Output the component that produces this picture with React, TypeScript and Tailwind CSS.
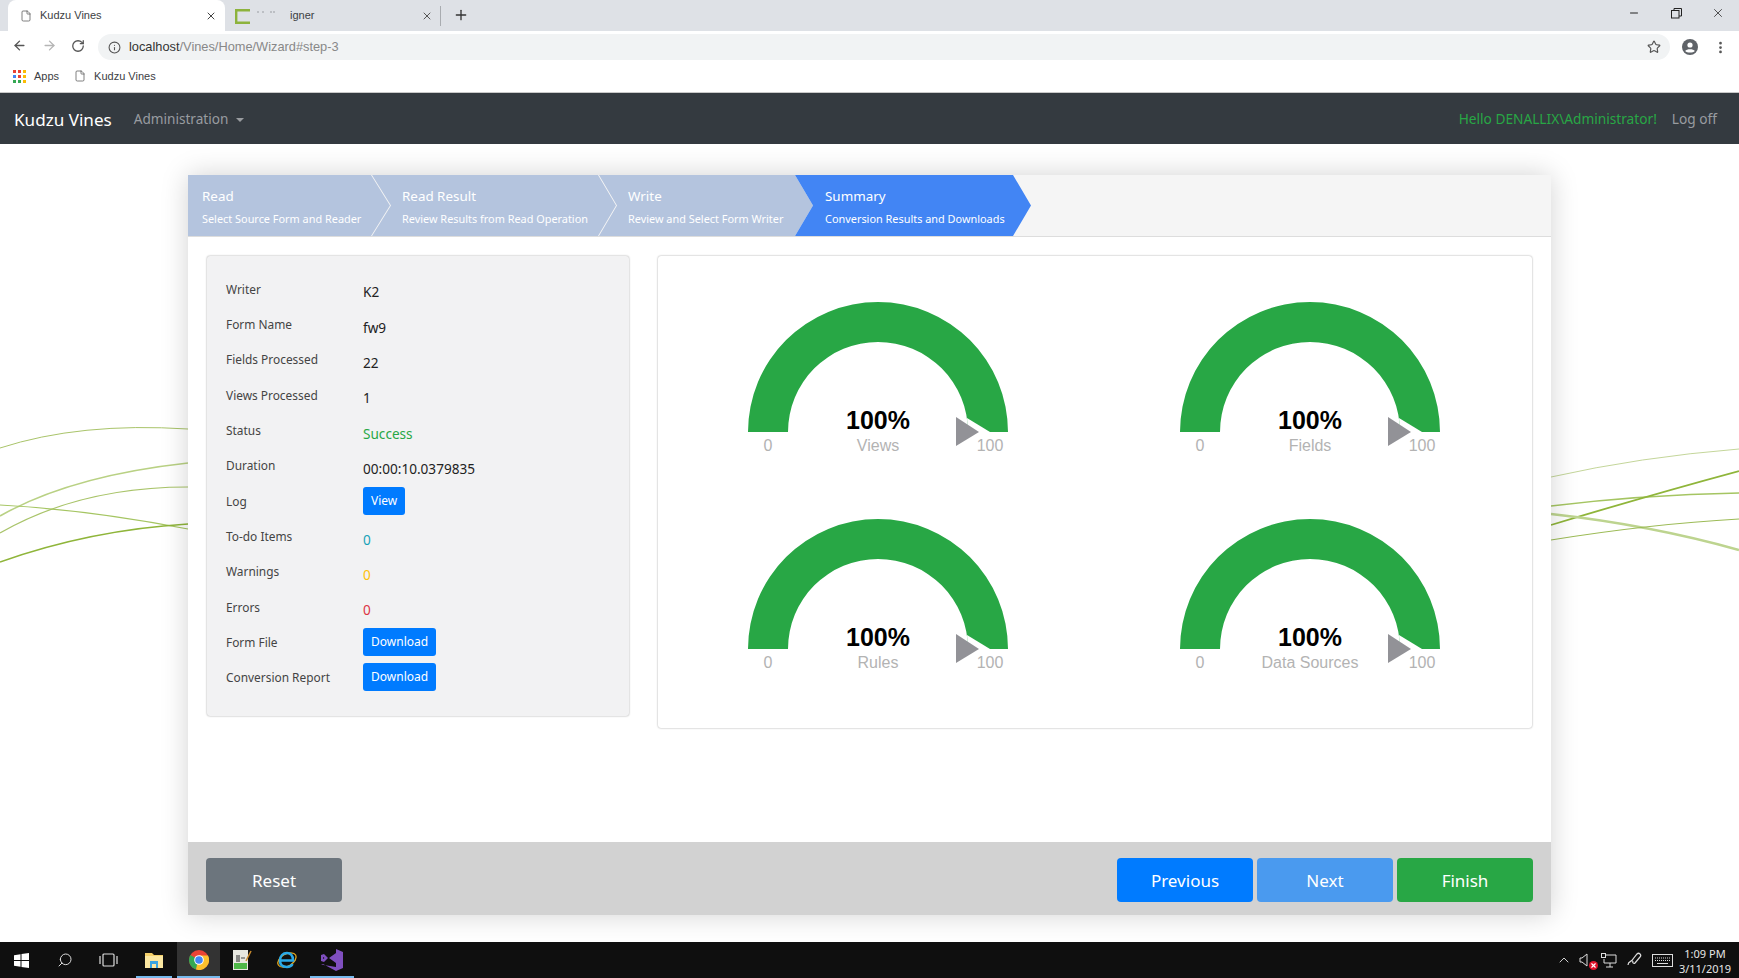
import { ArrowLeft, ArrowRight, RotateCw, Info, Star, MoreVertical, X, Minus, Plus, File, ChevronUp, Search } from 'lucide-react';

const pageFont = "font-['Noto_Sans',sans-serif]";

const steps = [
  { title: 'Read', sub: 'Select Source Form and Reader' },
  { title: 'Read Result', sub: 'Review Results from Read Operation' },
  { title: 'Write', sub: 'Review and Select Form Writer' },
  { title: 'Summary', sub: 'Conversion Results and Downloads', active: true },
];

const gauges = ['Views', 'Fields', 'Rules', 'Data Sources'];

function Gauge({ label }: { label: string }) {
  // justgage style half donut, center is at 150,136
  return (
    <svg width="300" height="166" viewBox="0 0 300 166" className="block mx-auto">
      <path d="M20 136 A130 130 0 0 1 280 136 L240 136 A90 90 0 0 0 60 136 Z" fill="#28a745" />
      <polygon points="240,136 239,122 262,136" fill="#ffffff" />
      <polygon points="228,121 228,150 251,136" fill="#929297" />
      <text x="150" y="133" textAnchor="middle" fontFamily="'Liberation Sans',Arial,sans-serif" fontWeight="700" fontSize="25" fill="#000000">100%</text>
      <text x="150" y="155" textAnchor="middle" fontFamily="'Liberation Sans',Arial,sans-serif" fontSize="16" fill="#b3b3b3">{label}</text>
      <text x="40" y="155" textAnchor="middle" fontFamily="'Liberation Sans',Arial,sans-serif" fontSize="16" fill="#b3b3b3">0</text>
      <text x="262" y="155" textAnchor="middle" fontFamily="'Liberation Sans',Arial,sans-serif" fontSize="16" fill="#b3b3b3">100</text>
    </svg>
  );
}

function Row({ label, children }: { label: string; children: React.ReactNode }) {
  return (
    <div className="flex items-center h-[35.33px]">
      <div className="w-[137px] shrink-0 text-[11.9px] text-[#444]">{label}</div>
      {children}
    </div>
  );
}

function Val({ children, color }: { children: React.ReactNode; color: string }) {
  return <div className={`pt-[6px] text-[13.6px] ${color}`}>{children}</div>;
}

function SmallBtn({ children }: { children: React.ReactNode }) {
  return (
    <button className="h-[28px] mb-[2px] px-[8px] rounded-[3px] bg-[#007bff] text-white text-[12px] leading-none">
      {children}
    </button>
  );
}

function BigBtn({ children, color }: { children: React.ReactNode; color: string }) {
  return (
    <button className={`w-[136px] h-[44px] pt-[2px] rounded-[4px] text-white text-[17px] ${color}`}>{children}</button>
  );
}

function Wallpaper() {
  return (
    <svg className="absolute left-0 top-[-144px] pointer-events-none" width="1739" height="978" fill="none">
      <path d="M0 448 Q80 422 188 429" stroke="#a9c46a" strokeWidth="1" />
      <path d="M0 516 Q70 476 188 463" stroke="#b9d184" strokeWidth="1.6" />
      <path d="M0 533 Q80 487 188 487" stroke="#a9c46a" strokeWidth="1.2" />
      <path d="M0 505 Q90 510 188 529" stroke="#a5c562" strokeWidth="1.2" />
      <path d="M0 562 Q90 530 188 524" stroke="#8fb53a" strokeWidth="1.6" />
      <path d="M1551 477 Q1640 457 1739 449" stroke="#c4d69a" strokeWidth="1" />
      <path d="M1551 506 Q1640 495 1739 493" stroke="#a5c562" strokeWidth="1.4" />
      <path d="M1551 525 Q1650 495 1739 471" stroke="#8fb53a" strokeWidth="1.8" />
      <path d="M1551 514 Q1650 525 1739 550" stroke="#bdd48f" strokeWidth="2.6" />
      <path d="M1551 540 Q1650 524 1739 519" stroke="#9cbb56" strokeWidth="1.2" />
    </svg>
  );
}

function BrowserChrome() {
  return (
    <div className="font-['Liberation_Sans',sans-serif] text-[11px] text-[#3c4043]">
      {/* Tabs */}
      <div className="h-[31px] bg-[#dee1e6] flex items-end">
        <div className="ml-[8px] w-[217px] h-[31px] bg-white rounded-t-[8px] flex items-center pl-[12px] pr-[8px]">
          <File className="w-[12px] h-[14px] text-[#555] shrink-0" strokeWidth={1.5} />
          <span className="ml-[8px] flex-1">Kudzu Vines</span>
          <X className="w-[12px] h-[12px] text-[#444]" />
        </div>
        <div className="w-[216px] h-[20px] my-[5px] flex items-center pl-[10px] pr-[7px] border-r border-[#a9acb0]">
          <svg width="15" height="15" viewBox="0 0 15 15" className="shrink-0">
            <path d="M0 1.2 H15 M0 13.8 H15 M1.2 0 V15" stroke="#8db33c" strokeWidth="2.4" fill="none" />
          </svg>
          <svg width="20" height="6" viewBox="0 0 20 6" className="ml-[7px] mb-[6px] shrink-0">
            <path d="M0 2 H3 M5 2 H8 M13 2 H19" stroke="#9a9da1" strokeWidth="1.2" strokeDasharray="2 1" fill="none" />
          </svg>
          <span className="ml-[13px] mb-[1px] flex-1">igner</span>
          <X className="w-[12px] h-[12px] text-[#555]" />
        </div>
        <Plus className="ml-[12px] mb-[8px] w-[16px] h-[16px] text-[#333]" strokeWidth={2} />
        <div className="flex-1" />
        <div className="flex items-center h-[31px] pb-[5px]">
          <Minus className="w-[12px] h-[12px] text-[#222]" />
          <svg width="11" height="11" viewBox="0 0 11 11" className="ml-[31px]" fill="none" stroke="#222">
            <rect x="0.5" y="2.5" width="7.5" height="7.5" />
            <path d="M3 2.5 V0.5 H10.5 V8 H8" />
          </svg>
          <X className="ml-[29px] mr-[14px] w-[14px] h-[14px] text-[#222]" strokeWidth={1.3} />
        </div>
      </div>
      {/* Address bar */}
      <div className="h-[29px] bg-white flex items-center pl-[12px] pr-[11px]">
        <ArrowLeft className="w-[15px] h-[15px] text-[#555]" strokeWidth={2.2} />
        <ArrowRight className="ml-[15px] w-[15px] h-[15px] text-[#b5b5b5]" strokeWidth={2.2} />
        <RotateCw className="ml-[14px] w-[14px] h-[14px] text-[#555]" strokeWidth={2.2} />
        <div className="ml-[13px] w-[1572px] h-[26px] rounded-full bg-[#f1f3f4] flex items-center pl-[10px] pr-[9px] mt-[3px]">
          <Info className="w-[13px] h-[13px] text-[#555]" strokeWidth={2} />
          <span className="ml-[8px] text-[12.8px] text-[#888]"><span className="text-[#333]">localhost</span>/Vines/Home/Wizard#step-3</span>
          <div className="flex-1" />
          <Star className="w-[14px] h-[14px] text-[#555]" strokeWidth={2} />
        </div>
        <svg width="16" height="16" viewBox="0 0 16 16" className="ml-[12px] mt-[3px]">
          <circle cx="8" cy="8" r="8" fill="#5f6368" />
          <circle cx="8" cy="6" r="2.6" fill="#fff" />
          <path d="M3.2 12 C4.5 9.5 11.5 9.5 12.8 12 C11 14 5 14 3.2 12Z" fill="#fff" />
        </svg>
        <MoreVertical className="ml-[15px] mt-[3px] w-[15px] h-[15px] text-[#555]" strokeWidth={2.4} />
      </div>
      {/* Bookmarks */}
      <div className="h-[33px] bg-white border-b border-[#c9c9c9] flex items-center pl-[13px]">
        <svg width="13" height="13" viewBox="0 0 13 13">
          {['#ea4335', '#ea4335', '#fbbc05', '#4285f4', '#ea4335', '#fbbc05', '#34a853', '#34a853', '#fbbc05'].map((c, i) => (
            <rect key={i} x={(i % 3) * 5} y={Math.floor(i / 3) * 5} width="3" height="3" fill={c} />
          ))}
        </svg>
        <span className="ml-[8px]">Apps</span>
        <File className="ml-[15px] w-[12px] h-[14px] text-[#555]" strokeWidth={1.5} />
        <span className="ml-[8px]">Kudzu Vines</span>
      </div>
    </div>
  );
}

function Taskbar() {
  const underline = 'absolute bottom-0 left-0 right-0 h-[2px] bg-[#76b9ed]';
  return (
    <div className="h-[36px] bg-[#0f0f0f] flex items-center text-[#e6e6e6] font-['Noto_Sans',sans-serif] relative">
      <svg width="15" height="15" viewBox="0 0 15 15" className="ml-[14px]" fill="#ffffff">
        <path d="M0 2.2 L6.5 1.2 V7 H0Z M7.5 1 L15 0 V7 H7.5Z M0 8 H6.5 V13.8 L0 12.8Z M7.5 8 H15 V15 L7.5 14Z" />
      </svg>
      <Search className="ml-[28px] w-[16px] h-[16px] -scale-x-100 text-[#dddddd]" strokeWidth={1.5} />
      <svg width="19" height="14" viewBox="0 0 19 14" className="ml-[26px]" fill="none" stroke="#dddddd" strokeWidth="1.2">
        <rect x="4" y="1" width="11" height="12" rx="1" />
        <path d="M1 3 V11 M18 3 V11" />
      </svg>
      <div className="ml-[18px] w-[36px] h-[36px] relative flex items-center justify-center">
        <svg width="20" height="18" viewBox="0 0 20 18">
          <path d="M1 2 H8 L10 4 H19 V17 H1Z" fill="#f3cf69" />
          <rect x="1" y="5" width="18" height="12" fill="#fbe7a1" />
          <path d="M6 17 V10 H14 V17 H12 V13 H8 V17Z" fill="#3aa4e0" />
        </svg>
        <div className={underline} />
      </div>
      <div className="ml-[5px] w-[43px] h-[36px] bg-[#333333] relative flex items-center justify-center">
        <svg width="20" height="20" viewBox="0 0 20 20">
          <circle cx="10" cy="10" r="10" fill="#ea4335" />
          <path d="M10 10 L1.3 5 A10 10 0 0 0 7 19.5Z" fill="#34a853" />
          <path d="M10 5.5 H19 A10 10 0 0 1 7 19.5 Z" fill="#fbc02d" />
          <circle cx="10" cy="10" r="4.8" fill="#ffffff" />
          <circle cx="10" cy="10" r="3.8" fill="#4285f4" />
        </svg>
        <div className={underline} />
      </div>
      <div className="ml-[12px] w-[20px] flex justify-center">
        <svg width="20" height="22" viewBox="0 0 20 22">
          <rect x="1" y="1" width="15" height="20" fill="#e8e8e0" />
          <rect x="2" y="14" width="13" height="6" fill="#4fb848" />
          <path d="M5 6 V13 M7 6 V13 M9 9 H13" stroke="#444" strokeWidth="1.2" />
          <path d="M14 12 L19 2" stroke="#c98a2c" strokeWidth="1.6" />
        </svg>
      </div>
      <div className="ml-[24px] w-[22px] flex justify-center">
        <svg width="22" height="22" viewBox="0 0 22 22" fill="none">
          <ellipse cx="11" cy="11" rx="10" ry="6" stroke="#e3a81f" strokeWidth="1.3" transform="rotate(-30 11 11)" />
          <path d="M4 11.5 H17 C17 6 14 4 11 4 C7 4 4 7 4 11.5 C4 16 7 18 11 18 C13.5 18 15.5 17 16.5 15" stroke="#2aa9e8" strokeWidth="2.6" />
        </svg>
      </div>
      <div className="ml-[12px] w-[44px] h-[36px] relative flex items-center justify-center">
        <svg width="22" height="22" viewBox="0 0 22 22" fill="#7f4fbf">
          <path d="M15 0 L22 3 V19 L15 22 L2 15 L0 15.5 L15 18Z M15 4 V14 L8 9Z" />
          <path d="M0 6 L3 5 L7 9 L3 13 L0 12Z M2 8 V10 L3.5 9Z" />
        </svg>
        <div className={underline} />
      </div>
      <div className="flex-1" />
      <ChevronUp className="w-[16px] h-[16px] text-[#dddddd]" strokeWidth={1.4} />
      <div className="ml-[7px] relative w-[16px] h-[16px]">
        <svg width="10" height="14" viewBox="0 0 10 14" fill="none" stroke="#dddddd" className="mt-[1px]">
          <path d="M1 5 H3 L8 1 V13 L3 9 H1Z" />
        </svg>
        <div className="absolute right-[-3px] bottom-[-2px] w-[9px] h-[9px] rounded-full bg-[#e0152d] flex items-center justify-center">
          <X className="w-[7px] h-[7px] text-white" strokeWidth={4} />
        </div>
      </div>
      <svg width="16" height="15" viewBox="0 0 16 15" fill="none" stroke="#dddddd" className="ml-[6px]">
        <path d="M4 2 H15 V10 H3 V6 M9 10 V14 M5 14 H12" />
        <rect x="0.5" y="0.5" width="4" height="4" />
      </svg>
      <svg width="16" height="16" viewBox="0 0 16 16" fill="none" stroke="#dddddd" strokeWidth="1.2" className="ml-[10px]">
        <path d="M1 13 C1 9 5 10 6 7 L10 2 C12 0 15 3 13 5 L8 11 C7 12 5 11 6 9" />
      </svg>
      <svg width="21" height="13" viewBox="0 0 21 13" fill="none" stroke="#dddddd" className="ml-[9px]">
        <rect x="0.5" y="0.5" width="20" height="12" />
        <path d="M3 4 H18 M3 6.5 H18" strokeDasharray="1 1" />
        <path d="M5 9.5 H16" />
      </svg>
      <div className="ml-[4px] w-[56px] mr-[6px] text-center text-[11px] leading-[15px] pt-[1px]">
        <div>1:09 PM</div>
        <div>3/11/2019</div>
      </div>
    </div>
  );
}

export default function App() {
  return (
    <div className={`w-[1739px] h-[978px] flex flex-col overflow-hidden bg-white ${pageFont}`}>
      <BrowserChrome />

      {/* Navbar */}
      <nav className="h-[51px] pt-[2px] bg-[#343a40] flex items-center pl-[14px] pr-[22px]">
        <span className="text-[17.1px] text-white">Kudzu Vines</span>
        <span className="ml-[22px] text-[13.6px] text-[#999ca0]">Administration</span>
        <span className="ml-[8px] w-0 h-0 border-x-[4px] border-x-transparent border-t-[4px] border-t-[#999ca0]" />
        <div className="flex-1" />
        <span className="text-[13.7px] text-[#28a745]">Hello DENALLIX\Administrator!</span>
        <span className="ml-[15px] text-[13.7px] text-[#999ca0]">Log off</span>
      </nav>

      <main className="flex-1 relative pt-[31px]">
        <Wallpaper />
        <div className="relative mx-auto w-[1363px] h-[740px] bg-white shadow-[0_0_26px_rgba(0,0,0,0.18)] flex flex-col">
          {/* Steps */}
          <div className="h-[62px] bg-[#f5f5f5] border-b border-[#dddddd] flex shrink-0">
            {steps.map((s, i) => (
              <div
                key={s.title}
                className={`h-[61px] pt-[3px] flex flex-col justify-center text-white ${s.active ? 'bg-[#4285f4]' : 'bg-[#b4c4de]'} ${
                  i === 0
                    ? 'w-[202px] pl-[14px] [clip-path:polygon(0_0,calc(100%-19px)_0,100%_50%,calc(100%-19px)_100%,0_100%)]'
                    : i === 1
                      ? 'w-[244px] -ml-[18px] pl-[30px] [clip-path:polygon(0_0,calc(100%-18px)_0,100%_50%,calc(100%-18px)_100%,0_100%,19px_50%)]'
                      : i === 2
                        ? 'w-[214px] -ml-[17px] pl-[29px] [clip-path:polygon(0_0,calc(100%-18px)_0,100%_50%,calc(100%-18px)_100%,0_100%,18px_50%)]'
                        : 'w-[236px] -ml-[18px] pl-[30px] [clip-path:polygon(0_0,calc(100%-18px)_0,100%_50%,calc(100%-18px)_100%,0_100%,18px_50%)]'
                }`}
              >
                <div className="text-[13.4px] leading-[20px]">{s.title}</div>
                <div className="text-[10.9px] leading-[18px] mt-[4px]">{s.sub}</div>
              </div>
            ))}
          </div>

          {/* Content */}
          <div className="flex-1 flex items-start pl-[19px] pt-[19px]">
            <div className="w-[422px] h-[460px] bg-[#f2f2f3] rounded-[3px] shadow-[0_0_2px_rgba(0,0,0,0.4)] pl-[19px] pt-[16px]">
              <Row label="Writer"><Val color="text-[#222]">K2</Val></Row>
              <Row label="Form Name"><Val color="text-[#222]">fw9</Val></Row>
              <Row label="Fields Processed"><Val color="text-[#222]">22</Val></Row>
              <Row label="Views Processed"><Val color="text-[#222]">1</Val></Row>
              <Row label="Status"><Val color="text-[#28a745]">Success</Val></Row>
              <Row label="Duration"><Val color="text-[#222]">00:00:10.0379835</Val></Row>
              <Row label="Log"><SmallBtn>View</SmallBtn></Row>
              <Row label="To-do Items"><Val color="text-[#17a2b8]">0</Val></Row>
              <Row label="Warnings"><Val color="text-[#ffc107]">0</Val></Row>
              <Row label="Errors"><Val color="text-[#dc3545]">0</Val></Row>
              <Row label="Form File"><SmallBtn>Download</SmallBtn></Row>
              <Row label="Conversion Report"><SmallBtn>Download</SmallBtn></Row>
            </div>
            <div className="ml-[29px] w-[874px] h-[472px] bg-white rounded-[3px] shadow-[0_0_2px_rgba(0,0,0,0.4)] pl-[4px] pr-[6px] pt-[40px] grid grid-cols-2 auto-rows-[217px]">
              {gauges.map((g) => (
                <Gauge key={g} label={g} />
              ))}
            </div>
          </div>

          {/* Footer buttons */}
          <div className="h-[73px] bg-[#d2d2d2] flex items-start pt-[16px] pl-[18px] pr-[18px] gap-[4px] shrink-0">
            <BigBtn color="bg-[#6c757d]">Reset</BigBtn>
            <div className="flex-1" />
            <BigBtn color="bg-[#007bff]">Previous</BigBtn>
            <BigBtn color="bg-[#4a9aef]">Next</BigBtn>
            <BigBtn color="bg-[#28a745]">Finish</BigBtn>
          </div>
        </div>
      </main>

      <Taskbar />
    </div>
  );
}
